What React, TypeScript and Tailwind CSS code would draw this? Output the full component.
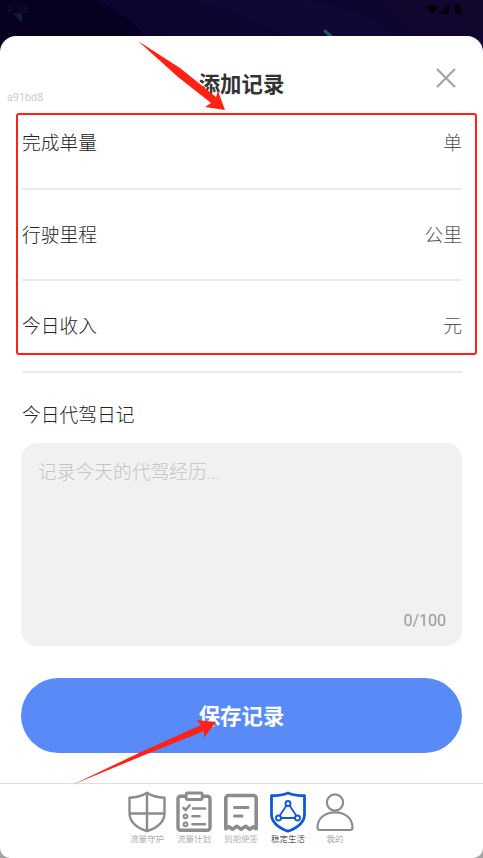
import React, { useState } from 'react';

interface RecordField {
  key: string;
  label: string;
  unit: string;
}

interface TabItem {
  label: string;
  icon: React.ReactNode;
  active?: boolean;
}

const MAX_LENGTH = 100;

const fields: RecordField[] = [
  { key: 'orders', label: '完成单量', unit: '单' },
  { key: 'distance', label: '行驶里程', unit: '公里' },
  { key: 'income', label: '今日收入', unit: '元' },
];

const ShieldCrossIcon = () => (
  <svg viewBox="0 0 38 42" className="h-[42px] w-[38px]" fill="none" stroke="#8c8c8c" strokeWidth="2.4">
    <path d="M19 1.800C15 4.500 8.500 6.500 1.500 6.700v15.300c0 8.500 6.500 14.500 17.500 18.200C30 36.500 36.500 30.500 36.500 22V6.700C29.500 6.500 23 4.500 19 1.800Z" strokeLinejoin="round" />
    <path d="M19 2v38M2 22.500h34" />
  </svg>
);

const PlanIcon = () => (
  <svg viewBox="0 0 38 42" className="h-[42px] w-[38px]" fill="none" stroke="#8c8c8c" strokeWidth="3.4" strokeLinecap="round">
    <path d="M10 5.200H5.500a2.500 2.500 0 0 0-2.500 2.500v29a2.500 2.500 0 0 0 2.500 2.500h27a2.500 2.500 0 0 0 2.500-2.500v-29a2.500 2.500 0 0 0-2.500-2.500H28" />
    <rect x="11.200" y="2" width="16" height="6.500" rx="1" strokeWidth="2.800" />
    <path d="M18 17.500h12M17.500 25.300h7M17.500 33.300h12.500" strokeWidth="2.600" />
    <path d="m8.500 17 2.200 2 3.800-4.500" strokeWidth="2.600" />
    <circle cx="10.500" cy="25.300" r="1.900" strokeWidth="2" />
    <circle cx="10.500" cy="33.300" r="1.900" strokeWidth="2" />
  </svg>
);

const NoteIcon = () => (
  <svg viewBox="0 0 38 42" className="h-[42px] w-[38px]" fill="none" stroke="#8c8c8c" strokeWidth="3.6">
    <path d="M3.800 37.800V7.300a2.800 2.800 0 0 1 2.800-2.800h24.800a2.800 2.800 0 0 1 2.800 2.800v30.500l-2.700-2-3.700 2.500-4.200-3-4.500 3-4.300-3-4.300 3-3.500-2.500Z" strokeLinejoin="round" />
    <path d="M12.500 16.500h13.500M12.500 25h7.500" strokeWidth="3" strokeLinecap="round" />
  </svg>
);

const LifeIcon = () => (
  <svg viewBox="0 0 38 42" className="h-[42px] w-[38px]" fill="none" stroke="#1059dc" strokeWidth="2.8">
    <path d="M19 2C14.500 4 8.500 4.700 2.500 4.700V23c0 8.500 6 13.500 16.500 17.300C29.500 36.500 35.500 31.500 35.500 23V4.700C29.500 4.700 23.500 4 19 2Z" strokeLinejoin="round" />
    <path d="m17.500 14.500-7 10.500M20.500 14.500l7 10.500M12 27h14" strokeWidth="1.800" />
    <circle cx="19" cy="12.500" r="2.500" strokeWidth="1.900" />
    <circle cx="9.500" cy="27" r="2.500" strokeWidth="1.900" />
    <circle cx="28.500" cy="27" r="2.500" strokeWidth="1.900" />
  </svg>
);

const MineIcon = () => (
  <svg viewBox="0 0 38 42" className="h-[42px] w-[38px]" fill="none" stroke="#8c8c8c" strokeWidth="2.200">
    <circle cx="19" cy="11.500" r="8.100" />
    <path d="M1.500 36.500C1.500 28 8 21.300 19 21.300S36.500 28 36.500 36.500c0 1.700-.8 2.500-2.500 2.500H4c-1.700 0-2.500-.8-2.500-2.500Z" />
  </svg>
);

const tabs: TabItem[] = [
  { label: '流量守护', icon: <ShieldCrossIcon /> },
  { label: '流量计划', icon: <PlanIcon /> },
  { label: '到期便签', icon: <NoteIcon /> },
  { label: '稳定生活', icon: <LifeIcon />, active: true },
  { label: '我的', icon: <MineIcon /> },
];

const StatusBar = () => (
  <div className="relative h-9 shrink-0">
    <svg className="absolute left-0 top-0" width="483" height="60" viewBox="0 0 483 60">
      <path d="M0 0H483V60H0Z" fill="#070020" />
      <path d="M94 0Q130 12 164 60H483V0Z" fill="#0d0430" />
      <path d="M190 0Q270 15 310 60H420Q380 10 305 0Z" fill="#0f0836" />
      <path d="M380 0Q410 20 425 60H483V0Z" fill="#12062f" />
      <path d="M13 13h9v10Z" fill="#08203a" />
      <path d="m325 31 8 7" stroke="#1b5d59" strokeWidth="3" strokeLinecap="round" />
    </svg>
    <div className="relative flex h-[18px] items-center justify-between pl-[7px] pr-[21px]">
      <span className="mt-[2px] text-[11px] leading-none text-[#15141f]">9:24</span>
      <svg width="36" height="12" viewBox="0 0 36 12" fill="#030108">
        <path d="M0 4Q6-1 12 4L6 11Z" />
        <path d="M23 1v10H13Z" />
        <path d="M29 2h1.500V.8h3V2H35v9h-6Z" />
      </svg>
    </div>
  </div>
);

const FieldRow = ({ field }: { field: RecordField }) => (
  <label className="flex h-[91.500px] justify-between border-b-2 border-[#ebebeb] pt-[32px] text-[18.750px] font-light leading-7">
    <span className="text-[#222]">{field.label}</span>
    <span className="text-[#555]">{field.unit}</span>
  </label>
);

const App = () => {
  const [diary, setDiary] = useState('');

  return (
    <div className="relative flex h-[858px] w-[483px] flex-col overflow-hidden bg-[#a3a3a3] font-[Roboto,'Noto_Sans_CJK_SC',sans-serif]">
      <StatusBar />

      <main className="relative flex flex-1 flex-col rounded-b-[10px] rounded-t-[16px] bg-white">
        <header className="grid h-[62px] grid-cols-[1fr_auto_1fr] items-start pl-[7px] pr-[7px]">
          <span className="mt-[54px] text-[10.800px] leading-4 text-[#ccc]">a91bd8</span>
          <h1 className="mt-[33px] text-[21.400px] font-bold leading-8 text-[#333]">添加记录</h1>
          <button aria-label="关闭" className="mr-5 mt-[32px] justify-self-end">
            <svg width="20" height="20" viewBox="0 0 20 20" stroke="#a3a3a3" strokeWidth="2.200">
              <path d="m1 1 18 18M19 1 1 19" />
            </svg>
          </button>
        </header>

        <section className="pl-[22px] pr-[21px]">
          {fields.map((field) => (
            <FieldRow key={field.key} field={field} />
          ))}
        </section>

        <section className="mt-[29.500px] px-[21px]">
          <h2 className="pl-px text-[18.750px] font-light leading-7 text-[#222]">今日代驾日记</h2>
          <div className="mt-[13px] flex h-[202.500px] flex-col rounded-[16px] bg-[#f1f1f1] px-4 pb-[12.500px] pt-[16px]">
            <textarea
              value={diary}
              maxLength={MAX_LENGTH}
              onChange={(e) => setDiary(e.target.value)}
              placeholder="记录今天的代驾经历..."
              className="flex-1 resize-none bg-transparent pl-px text-[18.750px] font-light leading-7 text-[#333] outline-none placeholder:text-[#c4c4c4]"
            />
            <span className="self-end text-[16px] leading-6 text-[#999]">{diary.length}/{MAX_LENGTH}</span>
          </div>
          <button className="mt-[32px] h-[75px] w-full rounded-full bg-[#588bf7] pt-[4px] text-[21.400px] font-bold text-white">
            保存记录
          </button>
        </section>

        <nav className="mt-auto flex h-[75px] justify-center border-t border-[#e0e0e0] pr-[2px] pt-[7px]">
          {tabs.map((tab) => (
            <div key={tab.label} className="flex w-[47px] flex-col items-center">
              {tab.icon}
              <span className={`whitespace-nowrap pl-px text-[8.500px] font-light leading-[12px] ${tab.active ? 'text-[#111]' : 'text-[#888]'}`}>
                {tab.label}
              </span>
            </div>
          ))}
        </nav>
      </main>

      {/* guide marks over the form */}
      <div className="pointer-events-none absolute left-4 top-[113px] h-[242px] w-[461px] rounded-[3px] border-2 border-[#ff2214]" />
      <svg className="pointer-events-none absolute inset-0" width="483" height="858" viewBox="0 0 483 858" fill="#ff2214">
        <path d="M138 41 180 68 216 97 218 91 225 110 205 107 211 103 178 77Z" />
        <path d="M72 785 142 751.500 201 725 196.500 720 216 722 204 738 204 731 142 756Z" />
      </svg>
    </div>
  );
};

export default App;
